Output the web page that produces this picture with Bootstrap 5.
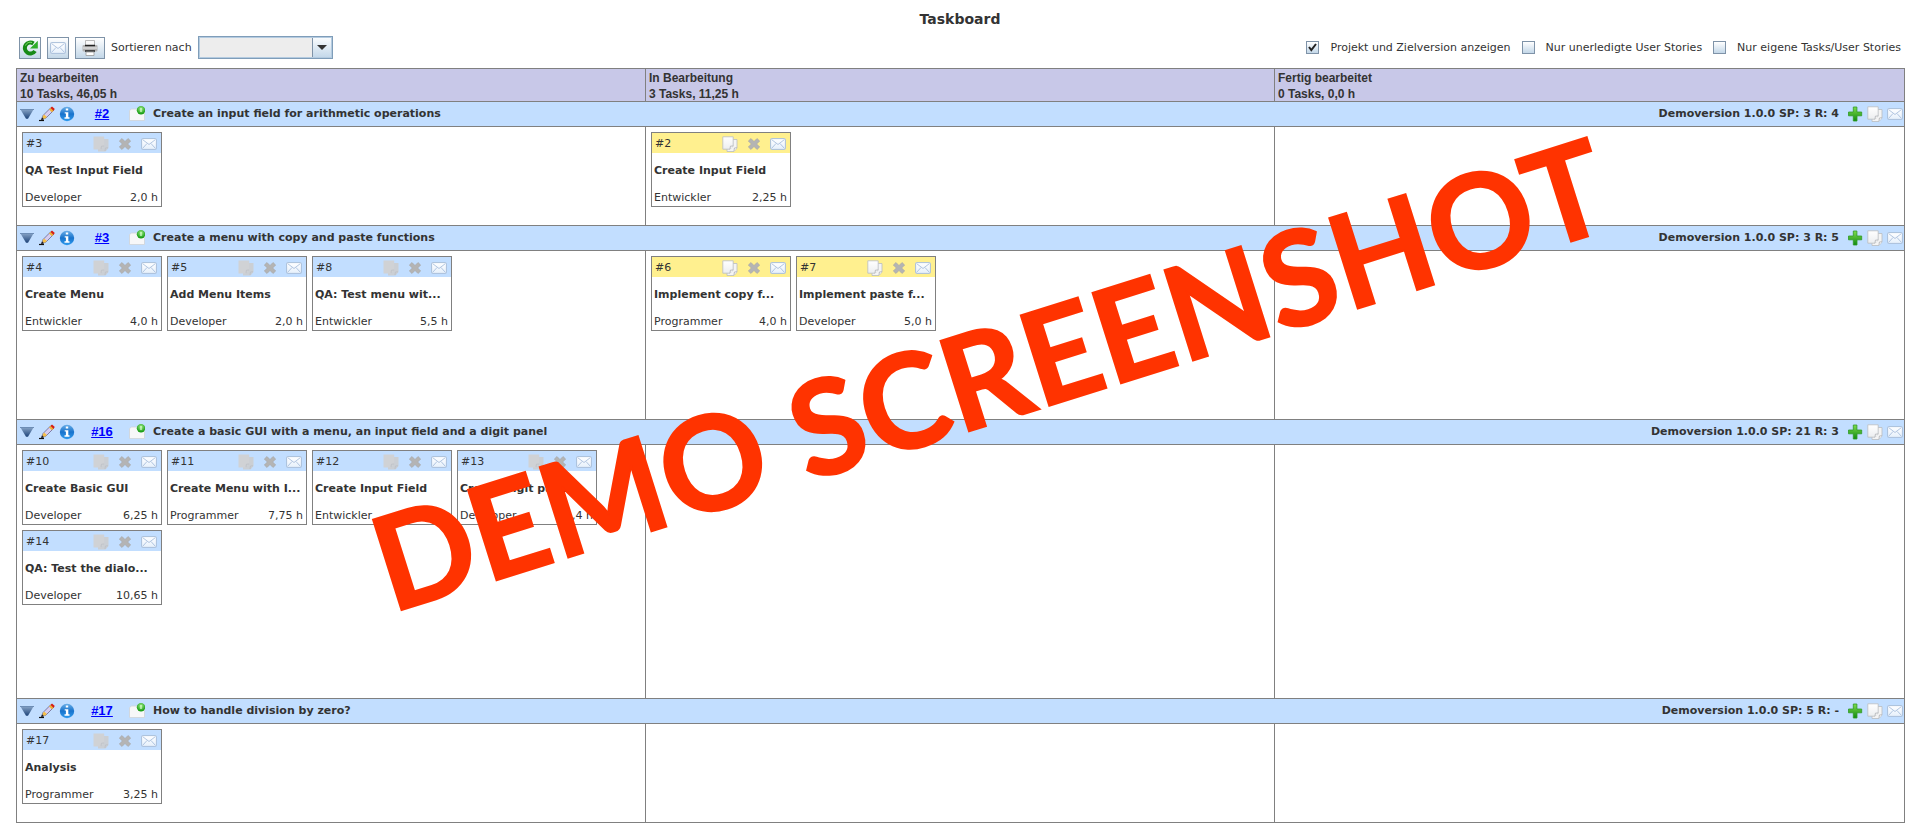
<!DOCTYPE html>
<html lang="de">
<head>
<meta charset="utf-8">
<meta name="viewport" content="width=device-width, initial-scale=1">
<title>Taskboard</title>
<link href="https://cdn.jsdelivr.net/npm/bootstrap@5.3.0/dist/css/bootstrap.min.css" rel="stylesheet">
<style>
body { font-family: "DejaVu Sans", Verdana, sans-serif; font-size: 11px; line-height: 16px; color: #333; background: #fff; }
svg { display: block; }
.page-title { font-size: 14px; font-weight: 700; line-height: 22px; }
.page-body { padding: 0 15px 0 16px; }
.toolbar { padding: 6px 4px 9px 3px; }
.tools { gap: 6px; }
.options { gap: 11px; }
.tool { height: 22px; width: 22px; border: 1px solid #7f93a8; background: linear-gradient(#fff, #c3d7e8); color: #333; }
.tool-wide { width: 30px; }
.sort-select { width: 135px; height: 23px; border: 1px solid #7f9db9; box-shadow: inset 0 0 0 1px #b4cbe0; appearance: none; font-size: 11px;
  background: url("data:image/svg+xml,%3Csvg xmlns='http://www.w3.org/2000/svg' width='20' height='23'%3E%3Cdefs%3E%3ClinearGradient id='g' x2='0' y2='1'%3E%3Cstop stop-color='%23fff'/%3E%3Cstop offset='1' stop-color='%23bfd5e8'/%3E%3C/linearGradient%3E%3C/defs%3E%3Cpath fill='url(%23g)' d='M0 0h20v23H0z'/%3E%3Cpath fill='%237f93a8' d='M0 0h1v23H0z'/%3E%3Cpath fill='%23333' d='M5 9h10l-5 5z'/%3E%3C/svg%3E") right center no-repeat #ededed; }
.opt-box { width: 13px; height: 13px; border: 1px solid #7f93a8; background: linear-gradient(#fff, #c3d7e8); appearance: none; }
.opt-box:checked { background: url("data:image/svg+xml,%3Csvg xmlns='http://www.w3.org/2000/svg' width='11' height='11'%3E%3Cpath fill='none' stroke='%23222' stroke-width='2' d='M2 5l2.300 3L9 2'/%3E%3C/svg%3E"), linear-gradient(#fff, #c3d7e8); }
.board { border: 1px solid #808080; border-top: 0; }
.board-head { height: 33px; border-top: 1px solid #808080; background: #c8c8e8; font: 700 12px/16px "Liberation Sans", Arial, sans-serif; }
.board-head > div { padding: 1px 3px 0; }
.lane > div:not(:last-child), .board-head > div:not(:last-child) { border-right: 1px solid #808080; }
.story { height: 26px; border: solid #808080; border-width: 1px 0; background: #c2deff; font-weight: 700; padding: 0 1px 0 2px; }
.story-no { width: 54px; text-align: center; font: 700 13px/16px "Liberation Sans", Arial, sans-serif; color: #00f; }
.icon-btn { border: 0; padding: 0; background: none; }
.lane > div { padding: 5px; }
.lane-s { min-height: 98px; }
.lane-m { min-height: 168px; }
.lane-l { min-height: 253px; }
.cards { gap: 5px; }
.task { width: 140px; height: 75px; border: 1px solid #808080; background: #fff; }
.task-top { height: 20px; background: #c2deff; padding: 2px 4px 0 3px; }
.task-active .task-top { background: #fff08f; }
.task-name { font-weight: 700; margin: 10px 0 11px; padding: 0 2px; }
.task-foot { padding: 0 3px 0 2px; }
.stamp { left: 51.5%; top: 40.3%; transform: translate(-50%, -50%) rotate(-17.5deg); font: 700 131px/1 Lato, sans-serif; color: #f30; -webkit-text-stroke: 2px #f30; pointer-events: none; }
</style>
</head>
<body>
<svg width="0" height="0" class="position-absolute" aria-hidden="true">
  <defs>
    <linearGradient id="gTri" x2="0" y2="1"><stop stop-color="#86a3c6"/><stop offset="1" stop-color="#1d4378"/></linearGradient>
    <linearGradient id="gInfo" x2="0" y2="1"><stop stop-color="#6aaee8"/><stop offset=".5" stop-color="#1873cc"/><stop offset="1" stop-color="#2f9bee"/></linearGradient>
    <linearGradient id="gGreen" x2="0" y2="1"><stop stop-color="#7fdc4c"/><stop offset="1" stop-color="#118a10"/></linearGradient>
    <linearGradient id="gPaper" x2="0" y2="1"><stop stop-color="#fff"/><stop offset="1" stop-color="#eceef0"/></linearGradient>
    <linearGradient id="gMail" x2="0" y2="1"><stop stop-color="#fff"/><stop offset="1" stop-color="#e6f0fb"/></linearGradient>
    <radialGradient id="gDot" cx=".5" cy=".35" r=".6"><stop stop-color="#a5ee8c"/><stop offset="1" stop-color="#129a10"/></radialGradient>
  </defs>
  <symbol id="tri" viewBox="0 0 16 16"><path d="M1.500 3.500h13L9 12.800H7z" fill="url(#gTri)"/><path d="M1 3.500h14" stroke="#6d8db5"/></symbol>
  <symbol id="pen" viewBox="0 0 16 16"><path d="M0 14.500h5" stroke="#111" stroke-width="1.200"/><path d="M2.500 13.500L4 9.500l8-8L15 4l-8 8z" fill="#d5cdf0" stroke="#5d5580" stroke-width=".7"/><path d="M2 14.200l1.200-3 2 2z" fill="#222"/><path d="M3.500 11L5 8.500 8 11l-3 2z" fill="#f6c044"/><path d="M10 3.500l1.500-1.500L14.500 4.800 13 6.200z" fill="#f0b030"/><path d="M11.500 2L13 .5l2.800 2.600-1.400 1.600z" fill="#d81e10"/></symbol>
  <symbol id="info" viewBox="0 0 16 16"><circle cx="8" cy="8" r="7.200" fill="url(#gInfo)"/><path d="M6.800 2.500h2.400v2H6.800zM5.700 6.200h3.600v5h1.200v1.500H5.500v-1.500h1.400V7.600H5.700z" fill="#fff"/></symbol>
  <symbol id="newtask" viewBox="0 0 16 16"><path d="M.5 4.500l2-1.500h6L15.500 6v8.500H.5z" fill="#f7f7f8" stroke="#cfd3d8" stroke-width=".8"/><circle cx="12" cy="4.200" r="4.200" fill="url(#gDot)"/><path d="M12 2v4" stroke="#d8ffd0" stroke-width="1.200"/></symbol>
  <symbol id="plus" viewBox="0 0 16 16"><path d="M6.300 1h3.600v5h4.800v3.800H10V15H6.300V9.800H1.500V6h4.800z" fill="url(#gGreen)" stroke="#2f9a24" stroke-width=".8" stroke-linejoin="round"/></symbol>
  <symbol id="copy" viewBox="0 0 16 16"><path d="M5 3.500h10V12l-3 3.500H5z" fill="#f4f4f4" stroke="#b9bcc0" stroke-width=".8"/><path d="M.8.800h10.400V10L8 13.200H.8z" fill="url(#gPaper)" stroke="#b9bcc0" stroke-width=".8"/><path d="M8 13.200l.4-3 2.800-.2M12 15l.4-3 2.600-.2" fill="#fff" stroke="#a9acb0" stroke-width=".8"/></symbol>
  <symbol id="copyoff" viewBox="0 0 16 16"><path d="M5 3h10.500v9l-3 3.500H5z" fill="#cbcfd4"/><path d="M.5.5h10.700V10L8 13.500H.5z" fill="#d0d2d5"/><path d="M8 13.200l.4-3 2.800-.2M12 15l.4-3 2.600-.2" fill="none" stroke="#bbbfc5" stroke-width=".8"/></symbol>
  <symbol id="mail" viewBox="0 0 16 16"><rect x=".6" y="2.600" width="14.800" height="10.800" rx=".8" fill="url(#gMail)" stroke="#a9bfda"/><path d="M1.500 3.500L8 8.500l6.500-5M1.500 12.500l4.500-5M14.500 12.500l-4.500-5" fill="none" stroke="#9fb8d8" stroke-width=".8"/></symbol>
  <symbol id="cross" viewBox="0 0 16 16"><path d="M5 2.500l3 3 3-3L13.700 5l-3 3 3 3L11 13.500l-3-3-3 3L2.300 11l3-3-3-3z" fill="#b4b4b4" stroke="#a4a4a4" stroke-width=".6"/></symbol>
  <symbol id="reload" viewBox="0 0 16 16"><path d="M13 11A5.500 5.500 0 1 1 11.500 3.500" fill="none" stroke="#178a17" stroke-width="4"/><path d="M15.800.8v7.700H8z" fill="#2fae2a"/><path d="M3.500 5.500A5 5 0 0 1 10 2.500" fill="none" stroke="#7fd76a"/></symbol>
  <symbol id="print" viewBox="0 0 16 16"><path d="M3.500.5h9v6h-9z" fill="#fafafa" stroke="#aaa" stroke-width=".8"/><rect x=".5" y="5" width="15" height="6.500" rx="1" fill="#b4b4b4"/><path d="M3 5.500h10M3 11h10" stroke="#222" stroke-width="1.600"/><path d="M1 8h14" stroke="#eee"/><path d="M4 12h8v3.500H4z" fill="#fff" stroke="#999" stroke-width=".8"/></symbol>
</svg>

<header class="text-center pt-2"><h1 class="page-title m-0">Taskboard</h1></header>

<main class="page-body">
  <div class="toolbar d-flex justify-content-between align-items-center">
    <div class="tools d-flex align-items-center">
      <button class="tool d-flex align-items-center justify-content-center p-0" aria-label="Aktualisieren"><svg width="16" height="16"><use href="#reload"/></svg></button>
      <button class="tool d-flex align-items-center justify-content-center p-0" aria-label="E-Mail"><svg width="16" height="16"><use href="#mail"/></svg></button>
      <button class="tool tool-wide d-flex align-items-center justify-content-center p-0" aria-label="Drucken"><svg width="16" height="16"><use href="#print"/></svg></button>
      <label for="sort">Sortieren nach</label>
      <select id="sort" class="sort-select rounded-0"><option></option></select>
    </div>
    <div class="options d-flex align-items-center">
      <input class="opt-box m-0" type="checkbox" id="o1" checked><label for="o1">Projekt und Zielversion anzeigen</label>
      <input class="opt-box m-0" type="checkbox" id="o2"><label for="o2">Nur unerledigte User Stories</label>
      <input class="opt-box m-0" type="checkbox" id="o3"><label for="o3">Nur eigene Tasks/User Stories</label>
    </div>
  </div>
  <div class="board position-relative" id="board"></div>
</main>

<script>
const icon = (n, s = 16) => `<svg width="${s}" height="${s}" aria-hidden="true"><use href="#${n}"/></svg>`;
const btn = (n, label) => `<button class="icon-btn" aria-label="${label}">${icon(n)}</button>`;
const columns = [['Zu bearbeiten', '10 Tasks, 46,05 h'], ['In Bearbeitung', '3 Tasks, 11,25 h'], ['Fertig bearbeitet', '0 Tasks, 0,0 h']];
const stories = [
  { no: 2, name: 'Create an input field for arithmetic operations', info: 'SP: 3 R: 4', size: 's',
    todo: [[3, 'QA Test Input Field', 'Developer', '2,0 h']],
    doing: [[2, 'Create Input Field', 'Entwickler', '2,25 h']] },
  { no: 3, name: 'Create a menu with copy and paste functions', info: 'SP: 3 R: 5', size: 'm',
    todo: [[4, 'Create Menu', 'Entwickler', '4,0 h'], [5, 'Add Menu Items', 'Developer', '2,0 h'], [8, 'QA: Test menu wit...', 'Entwickler', '5,5 h']],
    doing: [[6, 'Implement copy f...', 'Programmer', '4,0 h'], [7, 'Implement paste f...', 'Developer', '5,0 h']] },
  { no: 16, name: 'Create a basic GUI with a menu, an input field and a digit panel', info: 'SP: 21 R: 3', size: 'l',
    todo: [[10, 'Create Basic GUI', 'Developer', '6,25 h'], [11, 'Create Menu with I...', 'Programmer', '7,75 h'], [12, 'Create Input Field', 'Entwickler', '3,25 h'],
      [13, 'Create digit panel', 'Developer', '1,4 h'], [14, 'QA: Test the dialo...', 'Developer', '10,65 h']],
    doing: [] },
  { no: 17, name: 'How to handle division by zero?', info: 'SP: 5 R: -', size: 's',
    todo: [[17, 'Analysis', 'Programmer', '3,25 h']], doing: [] }
];
const task = (t, active) => `
  <article class="task ${active ? 'task-active' : ''}">
    <div class="task-top d-flex align-items-center"><span class="me-auto">#${t[0]}</span>
      <div class="d-flex gap-2">${btn(active ? 'copy' : 'copyoff', 'Kopieren')}${btn('cross', 'Löschen')}${btn('mail', 'E-Mail')}</div></div>
    <div class="task-name text-nowrap">${t[1]}</div>
    <div class="task-foot d-flex justify-content-between"><span>${t[2]}</span><span>${t[3]}</span></div>
  </article>`;
const lane = (list, active) => `<div class="col-4"><div class="cards d-flex flex-wrap">${list.map(t => task(t, active)).join('')}</div></div>`;
document.getElementById('board').innerHTML =
  `<div class="board-head row g-0">${columns.map(c => `<div class="col-4">${c[0]}<br>${c[1]}</div>`).join('')}</div>` +
  stories.map(s => `
  <section>
    <div class="story d-flex align-items-center">
      <div class="d-flex gap-1">${btn('tri', 'Zuklappen')}${btn('pen', 'Bearbeiten')}${btn('info', 'Info')}</div>
      <a class="story-no" href="#story${s.no}">#${s.no}</a>
      ${btn('newtask', 'Neuer Task')}<span class="ms-2 me-auto" id="story${s.no}">${s.name}</span>
      <span class="me-2">Demoversion 1.0.0 ${s.info}</span>
      <div class="d-flex gap-1">${btn('plus', 'Hinzufügen')}${btn('copy', 'Kopieren')}${btn('mail', 'E-Mail')}</div>
    </div>
    <div class="lane lane-${s.size} row g-0">${lane(s.todo, false)}${lane(s.doing, true)}${lane([], false)}</div>
  </section>`).join('') + `<div class="stamp position-absolute text-nowrap">DEMO SCREENSHOT</div>`;
</script>
<script src="https://cdn.jsdelivr.net/npm/bootstrap@5.3.0/dist/js/bootstrap.bundle.min.js"></script>
</body>
</html>
